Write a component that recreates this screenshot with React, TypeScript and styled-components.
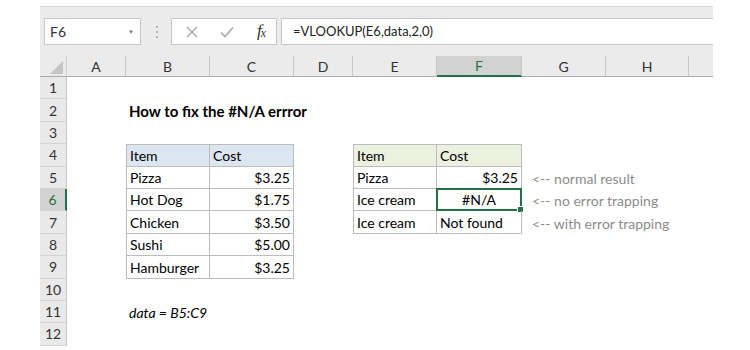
import React from 'react';
import styled, { createGlobalStyle, css } from 'styled-components';

const GlobalStyle = createGlobalStyle`
  body {
    margin: 0;
    background: #ffffff;
    font-family: 'Lato', 'Liberation Sans', sans-serif;
  }
`;

const COLS = ['A', 'B', 'C', 'D', 'E', 'F', 'G', 'H', ''];
const WIDTHS = '27px 59px 84px 84px 59px 84px 85px 84px 83px 24px';

type Kind = 'plain' | 'blue' | 'green' | 'box';

type CellData = {
    text: string;
    kind?: Kind;
    right?: boolean;
    center?: boolean;
    bold?: boolean;
    italic?: boolean;
    note?: boolean;
};

// cell contents keyed by address
const cells: Record<string, CellData> = {
    B2: { text: 'How to fix the #N/A errror', bold: true },
    B4: { text: 'Item', kind: 'blue' },
    C4: { text: 'Cost', kind: 'blue' },
    B5: { text: 'Pizza', kind: 'box' },
    C5: { text: '$3.25', kind: 'box', right: true },
    B6: { text: 'Hot Dog', kind: 'box' },
    C6: { text: '$1.75', kind: 'box', right: true },
    B7: { text: 'Chicken', kind: 'box' },
    C7: { text: '$3.50', kind: 'box', right: true },
    B8: { text: 'Sushi', kind: 'box' },
    C8: { text: '$5.00', kind: 'box', right: true },
    B9: { text: 'Hamburger', kind: 'box' },
    C9: { text: '$3.25', kind: 'box', right: true },
    B11: { text: 'data = B5:C9', italic: true },
    E4: { text: 'Item', kind: 'green' },
    F4: { text: 'Cost', kind: 'green' },
    E5: { text: 'Pizza', kind: 'box' },
    F5: { text: '$3.25', kind: 'box', right: true },
    E6: { text: 'Ice cream', kind: 'box' },
    F6: { text: '#N/A', kind: 'box', center: true },
    E7: { text: 'Ice cream', kind: 'box' },
    F7: { text: 'Not found', kind: 'box' },
    G5: { text: '<-- normal result', note: true },
    G6: { text: '<-- no error trapping', note: true },
    G7: { text: '<-- with error trapping', note: true },
};

const tables = [
    { c0: 1, c1: 2, r0: 4, r1: 9 },
    { c0: 4, c1: 5, r0: 4, r1: 7 },
];

const App = () => {
    const rows = Array.from({ length: 12 }, (_, i) => i + 1);

    return (
        <>
            <GlobalStyle/>
            <Page>
                <Toolbar>
                    <NameBox>
                        <span>F6</span>
                        <Caret>▼</Caret>
                    </NameBox>
                    <Dots>
                        <i/><i/><i/>
                    </Dots>
                    <FxButtons>
                        <svg width='12' height='12' viewBox='0 0 12 12'>
                            <path d='M1 1 L11 11 M11 1 L1 11' stroke='#a8a8a8' strokeWidth='1.4' fill='none'/>
                        </svg>
                        <svg width='14' height='12' viewBox='0 0 14 12'>
                            <path d='M1 6.5 L5 10.5 L13 1.5' stroke='#a8a8a8' strokeWidth='1.6' fill='none'/>
                        </svg>
                        <Fx>f<sub>x</sub></Fx>
                    </FxButtons>
                    <FormulaInput>=VLOOKUP(E6,data,2,0)</FormulaInput>
                </Toolbar>
                <Grid>
                    <Corner>
                        <svg width='13' height='13' viewBox='0 0 13 13'>
                            <path d='M13 0 L13 13 L0 13 Z' fill='#c4c4c4'/>
                        </svg>
                    </Corner>
                    {COLS.map((c, i) => (
                        <ColHead key={i} $active={c === 'F'} $last={c === ''}>{c}</ColHead>
                    ))}
                    {rows.map(r => (
                        <React.Fragment key={r}>
                            <RowHead $active={r === 6}>{r}</RowHead>
                            {COLS.map((c, ci) => {
                                const addr = c + r;
                                const d = c ? cells[addr] : undefined;
                                const t = tables.find(tb => ci >= tb.c0 && ci <= tb.c1 && r >= tb.r0 && r <= tb.r1);
                                return (
                                    <Cell
                                        key={ci}
                                        $kind={d?.kind}
                                        $boxed={!!t}
                                        $top={!!t && r === t.r0}
                                        $left={!!t && ci === t.c0}
                                        $right={d?.right}
                                        $center={d?.center}
                                        $bold={d?.bold}
                                        $italic={d?.italic}
                                        $note={d?.note}
                                    >
                                        {d?.text}
                                        {addr === 'F6' && <Selection><Handle/></Selection>}
                                    </Cell>
                                );
                            })}
                        </React.Fragment>
                    ))}
                </Grid>
            </Page>
        </>
    );
};

export default App;

const Page = styled.div`
  width: 673px;
  margin: 6px 0 0 40px;
`;

const Toolbar = styled.div`
  display: flex;
  align-items: center;
  height: 50px;
  padding: 0 0 0 4px;
  box-sizing: border-box;
  background: #ebebeb;
  border-top: 1px solid #d6d6d6;
`;

const NameBox = styled.div`
  display: flex;
  align-items: center;
  justify-content: space-between;
  width: 97px;
  height: 27px;
  box-sizing: border-box;
  padding: 0 6px 0 5px;
  background: #fff;
  border: 1px solid #c8c8c8;
  font-size: 14px;
  color: #333;
`;

const Caret = styled.span`
  font-size: 6px;
  color: #777;
`;

const Dots = styled.div`
  display: flex;
  flex-direction: column;
  gap: 3px;
  margin: 0 13px 0 15px;

  & i {
    display: block;
    width: 2px;
    height: 2px;
    background: #b4b4b4;
  }
`;

const FxButtons = styled.div`
  display: flex;
  align-items: center;
  justify-content: space-between;
  width: 106px;
  height: 27px;
  box-sizing: border-box;
  padding: 0 10px 0 14px;
  background: #fff;
  border: 1px solid #c8c8c8;
`;

const Fx = styled.span`
  font-family: 'Liberation Serif', serif;
  font-style: italic;
  font-size: 17px;
  line-height: 17px;
  color: #333;

  & sub {
    font-size: 12px;
    vertical-align: -1px;
    margin-left: -1px;
  }
`;

const FormulaInput = styled.div`
  flex: 1;
  height: 27px;
  margin-left: 4px;
  box-sizing: border-box;
  padding: 4px 0 0 11px;
  background: #fff;
  border: 1px solid #c8c8c8;
  border-right: none;
  font-size: 13px;
  color: #222;
`;

const Grid = styled.div`
  display: grid;
  grid-template-columns: ${WIDTHS};
  grid-template-rows: 21px repeat(12, 22.4px);
`;

const Corner = styled.div`
  display: flex;
  align-items: flex-end;
  justify-content: flex-end;
  padding: 0 3px 2px 0;
  background: #ebebeb;
  border-bottom: 1px solid #ababab;
  border-right: 1px solid #d0d0d0;
`;

const headText = css`
  display: flex;
  align-items: center;
  justify-content: center;
  font-size: 14px;
  color: #333;
  box-sizing: border-box;
`;

const ColHead = styled.div<{ $active?: boolean; $last?: boolean }>`
  ${headText};
  background: ${p => (p.$active ? '#d2d2d2' : '#ebebeb')};
  border-right: ${p => (p.$last ? 'none' : '1px solid #c6c6c6')};
  border-bottom: ${p => (p.$active ? '2px solid #217346' : '1px solid #ababab')};
  color: ${p => (p.$active ? '#217346' : '#333')};
`;

const RowHead = styled.div<{ $active?: boolean }>`
  ${headText};
  background: ${p => (p.$active ? '#d2d2d2' : '#e9e9e9')};
  border-bottom: 1px solid #d4d4d4;
  border-right: ${p => (p.$active ? '2px solid #217346' : '1px solid #c6c6c6')};
  color: ${p => (p.$active ? '#217346' : '#333')};
`;

const fills: Record<Kind, string> = {
    plain: 'transparent',
    blue: '#dce6f1',
    green: '#ebf1de',
    box: 'transparent',
};

const Cell = styled.div<{
    $kind?: Kind;
    $boxed?: boolean;
    $top?: boolean;
    $left?: boolean;
    $right?: boolean;
    $center?: boolean;
    $bold?: boolean;
    $italic?: boolean;
    $note?: boolean;
}>`
  position: relative;
  display: flex;
  align-items: flex-end;
  box-sizing: border-box;
  padding: 0 3px 1px;
  white-space: nowrap;
  font-size: ${p => (p.$bold ? '15px' : '14px')};
  line-height: 19px;
  color: #000;
  background: ${p => fills[p.$kind || 'plain']};
  justify-content: ${p => (p.$right ? 'flex-end' : p.$center ? 'center' : 'flex-start')};
  font-weight: ${p => (p.$bold ? 700 : 400)};
  font-style: ${p => (p.$italic ? 'italic' : 'normal')};

  ${p => p.$boxed && css`
    border-right: 1px solid #bcbcbc;
    border-bottom: 1px solid #bcbcbc;
  `}
  ${p => p.$top && css`border-top: 1px solid #bcbcbc;`}
  ${p => p.$left && css`border-left: 1px solid #bcbcbc;`}
  ${p => p.$note && css`
    color: #8c8c8c;
    padding-left: 10px;
  `}
`;

const Selection = styled.div`
  position: absolute;
  inset: -1px -1px -1px -1px;
  border: 2px solid #217346;
`;

const Handle = styled.div`
  position: absolute;
  right: -4px;
  bottom: -4px;
  width: 5px;
  height: 5px;
  background: #217346;
  border: 1px solid #fff;
`;
